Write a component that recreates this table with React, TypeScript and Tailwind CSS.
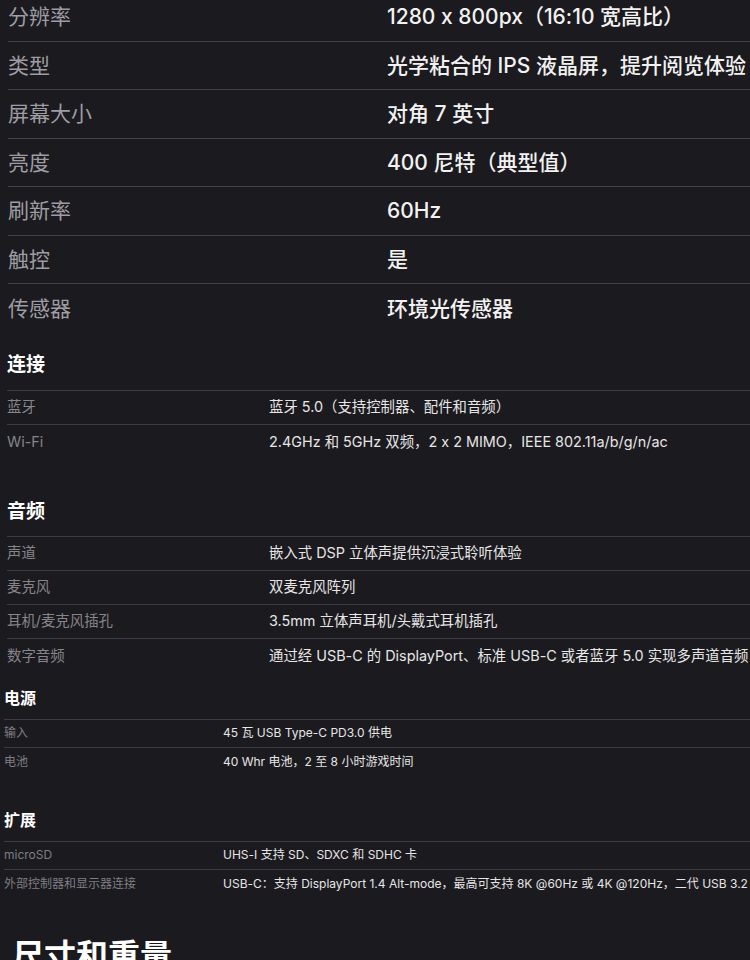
import React from "react";

type Row = [string, string];

const display: Row[] = [
  ["分辨率", "1280 x 800px（16:10 宽高比）"],
  ["类型", "光学粘合的 IPS 液晶屏，提升阅览体验"],
  ["屏幕大小", "对角 7 英寸"],
  ["亮度", "400 尼特（典型值）"],
  ["刷新率", "60Hz"],
  ["触控", "是"],
  ["传感器", "环境光传感器"],
];

const connect: Row[] = [
  ["蓝牙", "蓝牙 5.0（支持控制器、配件和音频）"],
  ["Wi-Fi", "2.4GHz 和 5GHz 双频，2 x 2 MIMO，IEEE 802.11a/b/g/n/ac"],
];

const audio: Row[] = [
  ["声道", "嵌入式 DSP 立体声提供沉浸式聆听体验"],
  ["麦克风", "双麦克风阵列"],
  ["耳机/麦克风插孔", "3.5mm 立体声耳机/头戴式耳机插孔"],
  ["数字音频", "通过经 USB-C 的 DisplayPort、标准 USB-C 或者蓝牙 5.0 实现多声道音频"],
];

const power: Row[] = [
  ["输入", "45 瓦 USB Type-C PD3.0 供电"],
  ["电池", "40 Whr 电池，2 至 8 小时游戏时间"],
];

const expand: Row[] = [
  ["microSD", "UHS-I 支持 SD、SDXC 和 SDHC 卡"],
  [
    "外部控制器和显示器连接",
    "USB-C：支持 DisplayPort 1.4 Alt-mode，最高可支持 8K @60Hz 或 4K @120Hz，二代 USB 3.2",
  ],
];

const font = { fontFamily: 'Inter, "Noto Sans CJK SC", sans-serif' };

export default function App() {
  return (
    <div
      className="w-[750px] h-[960px] overflow-hidden bg-[#1b1a1e] [font-feature-settings:'calt'_0]"
      style={font}
    >
      {/* Display */}
      <div className="-mt-[7px] ml-[8px]">
        {display.map(([k, v], i) => (
          <div
            key={k}
            className={`flex items-center h-[48.5px] ${i < display.length - 1 ? "border-b border-[#43424a]" : ""}`}
          >
            <div className="w-[379px] shrink-0 text-[21px] text-[#9e9da3]">{k}</div>
            <div className="text-[21px] text-[#f2f2f2] font-medium whitespace-nowrap">{v}</div>
          </div>
        ))}
      </div>

      {/* Connect */}
      <div className="ml-[7px] mt-[20px]">
        <div className="text-[19px] leading-[24px] font-bold text-white">连接</div>
        <div className="mt-[13px] border-t border-[#3d3c43]">
          {connect.map(([k, v], i) => (
            <div
              key={k}
              className={`flex items-center h-[34px] ${i < connect.length - 1 ? "border-b border-[#3d3c43]" : ""}`}
            >
              <div className="w-[262px] shrink-0 text-[14.4px] text-[#86858b]">{k}</div>
              <div className="text-[14.4px] text-[#e6e6e6] whitespace-nowrap">{v}</div>
            </div>
          ))}
        </div>
      </div>

      {/* Audio */}
      <div className="ml-[7px] mt-[41px]">
        <div className="text-[19px] leading-[24px] font-bold text-white">音频</div>
        <div className="mt-[12px] border-t border-[#3d3c43]">
          {audio.map(([k, v], i) => (
            <div
              key={k}
              className={`flex items-center h-[34px] ${i < audio.length - 1 ? "border-b border-[#3d3c43]" : ""}`}
            >
              <div className="w-[262px] shrink-0 text-[14.4px] text-[#86858b]">{k}</div>
              <div className="text-[14.4px] text-[#e6e6e6] whitespace-nowrap">{v}</div>
            </div>
          ))}
        </div>
      </div>

      {/* Power */}
      <div className="ml-[4px] mt-[15px]">
        <div className="text-[16px] leading-[20px] font-bold text-white">电源</div>
        <div className="mt-[11px] border-t border-[#3d3c43]">
          {power.map(([k, v], i) => (
            <div
              key={k}
              className={`flex items-center h-[28px] ${i < power.length - 1 ? "border-b border-[#3d3c43]" : ""}`}
            >
              <div className="w-[219px] shrink-0 text-[12px] text-[#7f7e84]">{k}</div>
              <div className="text-[12px] text-[#e6e6e6] whitespace-nowrap">{v}</div>
            </div>
          ))}
        </div>
      </div>

      {/* Expansion */}
      <div className="ml-[4px] mt-[34px]">
        <div className="text-[16px] leading-[20px] font-bold text-white">扩展</div>
        <div className="mt-[11px] border-t border-[#3d3c43]">
          {expand.map(([k, v], i) => (
            <div
              key={k}
              className={`flex items-center h-[28px] ${i < expand.length - 1 ? "border-b border-[#3d3c43]" : ""}`}
            >
              <div className="w-[219px] shrink-0 text-[12px] text-[#7f7e84] whitespace-nowrap">{k}</div>
              <div className="text-[12px] text-[#e6e6e6] whitespace-nowrap">{v}</div>
            </div>
          ))}
        </div>
      </div>

      {/* Size */}
      <div className="ml-[12px] mt-[38px] text-[32px] leading-[40px] font-bold text-white">尺寸和重量</div>
    </div>
  );
}
